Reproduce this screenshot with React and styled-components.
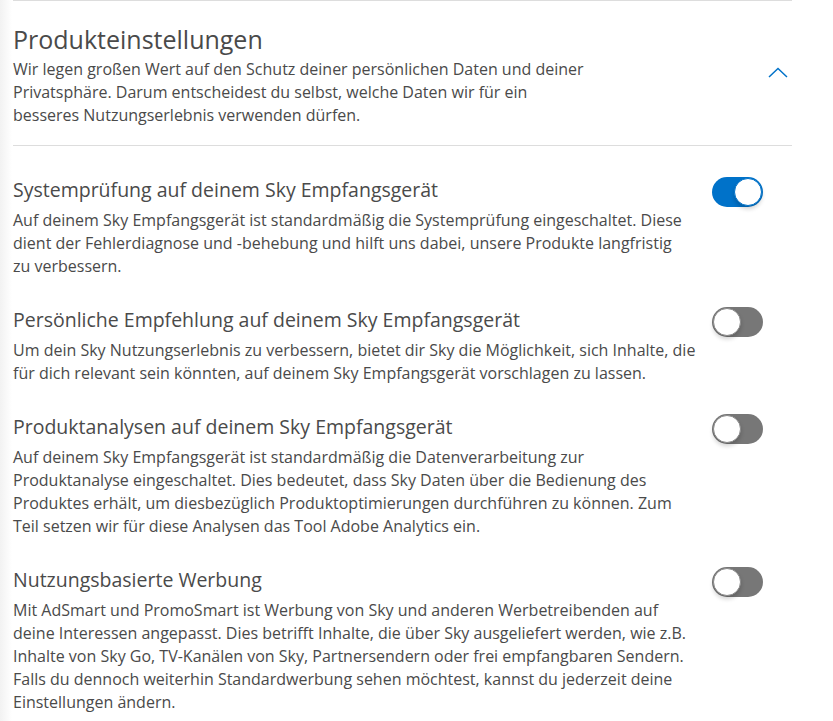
import React, { useState } from "react";
import styled, { createGlobalStyle } from "styled-components";

const GlobalStyle = createGlobalStyle`
  html, body {
    margin: 0;
    padding: 0;
    background: linear-gradient(to right, #f2f2f2 0, #ffffff 12px);
    font-family: "Open Sans", "Liberation Sans", sans-serif;
    color: #4a4a4a;
  }
`;

const Page = styled.div`
  width: 779px;
  margin-left: 13px;
  border-top: 1px solid #dddddd;
`;

const Header = styled.div`
  display: flex;
  align-items: center;
  padding: 22px 0 18px;
  border-bottom: 1px solid #dddddd;
`;

const HeaderText = styled.div`
  flex: 1;
`;

const Title = styled.h1`
  margin: 0 0 3px;
  font-size: 25px;
  line-height: 32px;
  font-weight: 400;
  color: #4a4a4a;
`;

const Text = styled.p`
  margin: 0;
  font-size: 16px;
  line-height: 23px;
  color: #4a4a4a;
  max-width: ${(p) => p.maxWidth || "none"};
`;

const CollapseButton = styled.button`
  width: 24px;
  height: 16px;
  margin: 0 2px 6px 0;
  padding: 0;
  border: none;
  background: none;
  cursor: pointer;
  display: flex;
  align-items: center;
  justify-content: center;
`;

const List = styled.div`
  display: flex;
  flex-direction: column;
  gap: 29px;
  padding-top: 31px;
`;

const Row = styled.div`
  display: flex;
  align-items: flex-start;
`;

const RowText = styled.div`
  flex: 1;
  padding-right: 14px;
`;

const RowTitle = styled.h2`
  margin: 0 0 6px;
  font-size: 19.5px;
  line-height: 26px;
  font-weight: 400;
  color: #4a4a4a;
`;

const Track = styled.button`
  position: relative;
  flex: none;
  width: 51px;
  height: 30px;
  margin-right: 29px;
  padding: 0;
  border: none;
  border-radius: 15px;
  cursor: pointer;
  background: ${(p) => (p.on ? "#0072c9" : "#777777")};
  transition: background 0.2s;
`;

const Knob = styled.span`
  position: absolute;
  top: 1px;
  left: ${(p) => (p.on ? "22px" : "1px")};
  width: 28px;
  height: 28px;
  box-sizing: border-box;
  border-radius: 50%;
  background: #ffffff;
  border: 1px solid ${(p) => (p.on ? "#0072c9" : "#8a8a8a")};
  box-shadow: 0 3px 4px rgba(0, 0, 0, 0.18);
  transition: left 0.2s;
`;

const Toggle = ({ on, onClick }) => (
  <Track on={on} onClick={onClick} aria-pressed={on}>
    <Knob on={on} />
  </Track>
);

const settings = [
  {
    id: "system",
    title: "Systemprüfung auf deinem Sky Empfangsgerät",
    text: "Auf deinem Sky Empfangsgerät ist standardmäßig die Systemprüfung eingeschaltet. Diese dient der Fehlerdiagnose und -behebung und hilft uns dabei, unsere Produkte langfristig zu verbessern.",
    maxWidth: "672px",
    on: true,
  },
  {
    id: "recommend",
    title: "Persönliche Empfehlung auf deinem Sky Empfangsgerät",
    text: "Um dein Sky Nutzungserlebnis zu verbessern, bietet dir Sky die Möglichkeit, sich Inhalte, die für dich relevant sein könnten, auf deinem Sky Empfangsgerät vorschlagen zu lassen.",
    on: false,
  },
  {
    id: "analytics",
    title: "Produktanalysen auf deinem Sky Empfangsgerät",
    text: "Auf deinem Sky Empfangsgerät ist standardmäßig die Datenverarbeitung zur Produktanalyse eingeschaltet. Dies bedeutet, dass Sky Daten über die Bedienung des Produktes erhält, um diesbezüglich Produktoptimierungen durchführen zu können. Zum Teil setzen wir für diese Analysen das Tool Adobe Analytics ein.",
    maxWidth: "660px",
    on: false,
  },
  {
    id: "ads",
    title: "Nutzungsbasierte Werbung",
    text: "Mit AdSmart und PromoSmart ist Werbung von Sky und anderen Werbetreibenden auf deine Interessen angepasst. Dies betrifft Inhalte, die über Sky ausgeliefert werden, wie z.B. Inhalte von Sky Go, TV-Kanälen von Sky, Partnersendern oder frei empfangbaren Sendern. Falls du dennoch weiterhin Standardwerbung sehen möchtest, kannst du jederzeit deine Einstellungen ändern.",
    on: false,
  },
];

const App = () => {
  const [state, setState] = useState(
    Object.fromEntries(settings.map((s) => [s.id, s.on]))
  );

  return (
    <>
      <GlobalStyle />
      <Page>
        <Header>
          <HeaderText>
            <Title>Produkteinstellungen</Title>
            <Text maxWidth="580px">
              Wir legen großen Wert auf den Schutz deiner persönlichen Daten und
              deiner Privatsphäre. Darum entscheidest du selbst, welche Daten wir
              für ein besseres Nutzungserlebnis verwenden dürfen.
            </Text>
          </HeaderText>
          <CollapseButton aria-label="Einklappen">
            <svg width="20" height="11" viewBox="0 0 20 11">
              <path d="M1 10 L10 1.5 L19 10" fill="none" stroke="#0072c9" strokeWidth="1.5" />
            </svg>
          </CollapseButton>
        </Header>
        <List>
          {settings.map((s) => (
            <Row key={s.id}>
              <RowText>
                <RowTitle>{s.title}</RowTitle>
                <Text maxWidth={s.maxWidth}>{s.text}</Text>
              </RowText>
              <Toggle
                on={state[s.id]}
                onClick={() => setState({ ...state, [s.id]: !state[s.id] })}
              />
            </Row>
          ))}
        </List>
      </Page>
    </>
  );
};

export default App;
